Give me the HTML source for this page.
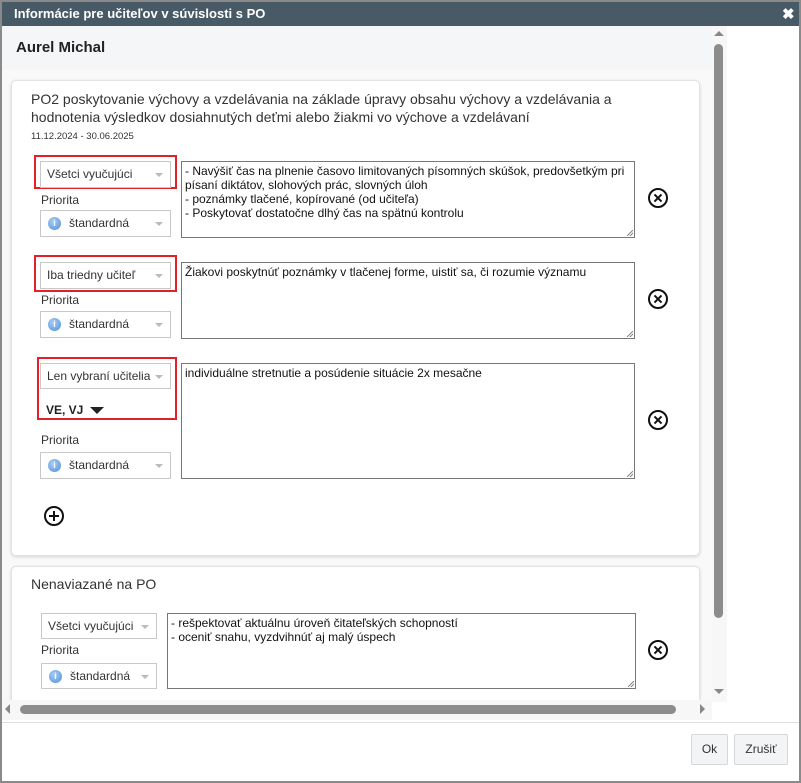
<!DOCTYPE html>
<html><head><meta charset="utf-8"><style>
*{box-sizing:border-box;margin:0;padding:0}
body{width:801px;height:783px;position:relative;background:#fff;font-family:"Liberation Sans",Arial,sans-serif;overflow:hidden;color:#222}
.a{position:absolute}
.frame{left:0;top:0;width:801px;height:783px;border:2px solid #8a8a8a;border-top:2px solid #8a8a8a}
.title{left:2px;top:2px;width:797px;height:24px;background:#475a65;color:#fff;font-weight:bold;font-size:13px;line-height:24px;padding-left:12px}
.hdr{left:2px;top:26px;width:710px;height:44px;background:#f5f6f8;font-weight:bold;font-size:15px;line-height:44px;padding-left:14px;color:#222}
.view{left:2px;top:70px;width:710px;height:632px;background:#f9f9f9}
.card{background:#fff;border:1px solid #e2e2e2;border-radius:5px;box-shadow:0 1px 3px rgba(0,0,0,.15)}
.sel{border:1px solid #c8c8c8;background:#fff;font-size:12px;line-height:25px;padding-left:6px;color:#333}
.sel:after{content:"";position:absolute;right:7px;top:11px;border-left:4px solid transparent;border-right:4px solid transparent;border-top:4px solid #bbb}
.red{border:2px solid #e3202a}
.ta{border:1px solid #777;font-size:12px;line-height:14px;padding:2px 3px;background:#fff;color:#111}
.ta:after{content:"";position:absolute;right:1px;bottom:1px;width:6px;height:6px;background:linear-gradient(135deg,transparent 45%,#888 45%,#888 55%,transparent 55%,transparent 70%,#888 70%,#888 80%,transparent 80%)}
.lbl{font-size:12px;color:#333}
.info{position:absolute;left:7px;top:6px;width:13px;height:13px;border-radius:50%;background:radial-gradient(circle at 40% 35%,#a9cdf5,#4f8fd9);color:#fff;font-size:9px;line-height:13px;text-align:center;font-weight:bold}
.pr{padding-left:28px}
.x{width:20px;height:20px;border:2px solid #111;border-radius:50%}
.x:before,.x:after{content:"";position:absolute;left:3px;top:7px;width:10px;height:2px;background:#111;transform:rotate(45deg)}
.x:after{transform:rotate(-45deg)}
.btn{border:1px solid #d5d7da;background:#f3f4f6;font-size:12px;line-height:29px;text-align:center;color:#333;border-radius:2px}
</style></head><body>
<div class="a frame"></div>
<div class="a title">Informácie pre učiteľov v súvislosti s PO</div>
<div class="a" style="left:782px;top:5px;color:#fff;font-size:15px;font-weight:bold">✖</div>
<div class="a hdr">Aurel Michal</div>
<div class="a view"></div>

<div class="a card" style="left:11px;top:80px;width:689px;height:476px"></div>
<div class="a" style="left:31px;top:90px;font-size:14px;line-height:18px;color:#333;width:640px">PO2 poskytovanie výchovy a vzdelávania na základe úpravy obsahu výchovy a vzdelávania a hodnotenia výsledkov dosiahnutých deťmi alebo žiakmi vo výchove a vzdelávaní</div>
<div class="a" style="left:31px;top:131px;font-size:9.5px;color:#333">11.12.2024 - 30.06.2025</div>

<div class="a red" style="left:34px;top:155px;width:143px;height:34px"></div>
<div class="a sel" style="left:40px;top:161px;width:131px;height:27px">Všetci vyučujúci</div>
<div class="a lbl" style="left:41px;top:193px">Priorita</div>
<div class="a sel pr" style="left:40px;top:210px;width:131px;height:27px"><span class="info">i</span>štandardná</div>
<div class="a ta" style="left:181px;top:161px;width:454px;height:77px">- Navýšiť čas na plnenie časovo limitovaných písomných skúšok, predovšetkým pri písaní diktátov, slohových prác, slovných úloh<br>- poznámky tlačené, kopírované (od učiteľa)<br>- Poskytovať dostatočne dlhý čas na spätnú kontrolu</div>
<div class="a x" style="left:648px;top:188px"></div>

<div class="a red" style="left:34px;top:255px;width:143px;height:37px"></div>
<div class="a sel" style="left:40px;top:262px;width:131px;height:27px">Iba triedny učiteľ</div>
<div class="a lbl" style="left:41px;top:293px">Priorita</div>
<div class="a sel pr" style="left:40px;top:311px;width:131px;height:27px"><span class="info">i</span>štandardná</div>
<div class="a ta" style="left:181px;top:262px;width:454px;height:77px">Žiakovi poskytnúť poznámky v tlačenej forme, uistiť sa, či rozumie významu</div>
<div class="a x" style="left:648px;top:289px"></div>

<div class="a red" style="left:37px;top:357px;width:140px;height:63px"></div>
<div class="a sel" style="left:40px;top:363px;width:131px;height:26px">Len vybraní učitelia</div>
<div class="a" style="left:46px;top:403px;font-size:12px;font-weight:bold;color:#222">VE, VJ <span style="display:inline-block;width:0;height:0;border-left:7px solid transparent;border-right:7px solid transparent;border-top:7px solid #222;margin-left:3px"></span></div>
<div class="a lbl" style="left:41px;top:433px">Priorita</div>
<div class="a sel pr" style="left:40px;top:452px;width:131px;height:27px"><span class="info">i</span>štandardná</div>
<div class="a ta" style="left:181px;top:363px;width:454px;height:116px">individuálne stretnutie a posúdenie situácie 2x mesačne</div>
<div class="a x" style="left:648px;top:410px"></div>

<div class="a" style="left:44px;top:506px;width:20px;height:20px;border:2px solid #111;border-radius:50%"><div class="a" style="left:3px;top:7px;width:10px;height:2px;background:#111"></div><div class="a" style="left:7px;top:3px;width:2px;height:10px;background:#111"></div></div>

<div class="a card" style="left:11px;top:566px;width:689px;height:170px"></div>
<div class="a" style="left:31px;top:576px;font-size:14px;color:#333">Nenaviazané na PO</div>
<div class="a sel" style="left:41px;top:613px;width:116px;height:26px">Všetci vyučujúci</div>
<div class="a lbl" style="left:41px;top:643px">Priorita</div>
<div class="a sel pr" style="left:41px;top:663px;width:116px;height:26px"><span class="info">i</span>štandardná</div>
<div class="a ta" style="left:167px;top:613px;width:469px;height:76px">- rešpektovať aktuálnu úroveň čitateľských schopností<br>- oceniť snahu, vyzdvihnúť aj malý úspech</div>
<div class="a x" style="left:648px;top:640px"></div>

<div class="a" style="left:2px;top:700px;width:797px;height:83px;background:#fff"></div>
<div class="a" style="left:2px;top:700px;width:710px;height:20px;background:#f7f7f7"></div>
<div class="a" style="left:712px;top:26px;width:15px;height:676px;background:#f7f7f7"></div>
<div class="a" style="left:714px;top:44px;width:9px;height:574px;background:#8c8c8c;border-radius:5px"></div>
<div class="a" style="left:714px;top:31px;border-left:5px solid transparent;border-right:5px solid transparent;border-bottom:5px solid #888"></div>
<div class="a" style="left:714px;top:689px;border-left:5px solid transparent;border-right:5px solid transparent;border-top:5px solid #888"></div>
<div class="a" style="left:20px;top:705px;width:656px;height:9px;background:#8c8c8c;border-radius:5px"></div>
<div class="a" style="left:5px;top:704px;border-top:5px solid transparent;border-bottom:5px solid transparent;border-right:5px solid #888"></div>
<div class="a" style="left:700px;top:704px;border-top:5px solid transparent;border-bottom:5px solid transparent;border-left:5px solid #888"></div>

<div class="a" style="left:2px;top:722px;width:797px;height:1px;background:#ddd"></div>
<div class="a btn" style="left:691px;top:734px;width:37px;height:31px">Ok</div>
<div class="a btn" style="left:734px;top:734px;width:54px;height:31px">Zrušiť</div>
<div class="a" style="left:0;top:0;width:801px;height:783px;border:2px solid #8a8a8a"></div>
</body></html>
